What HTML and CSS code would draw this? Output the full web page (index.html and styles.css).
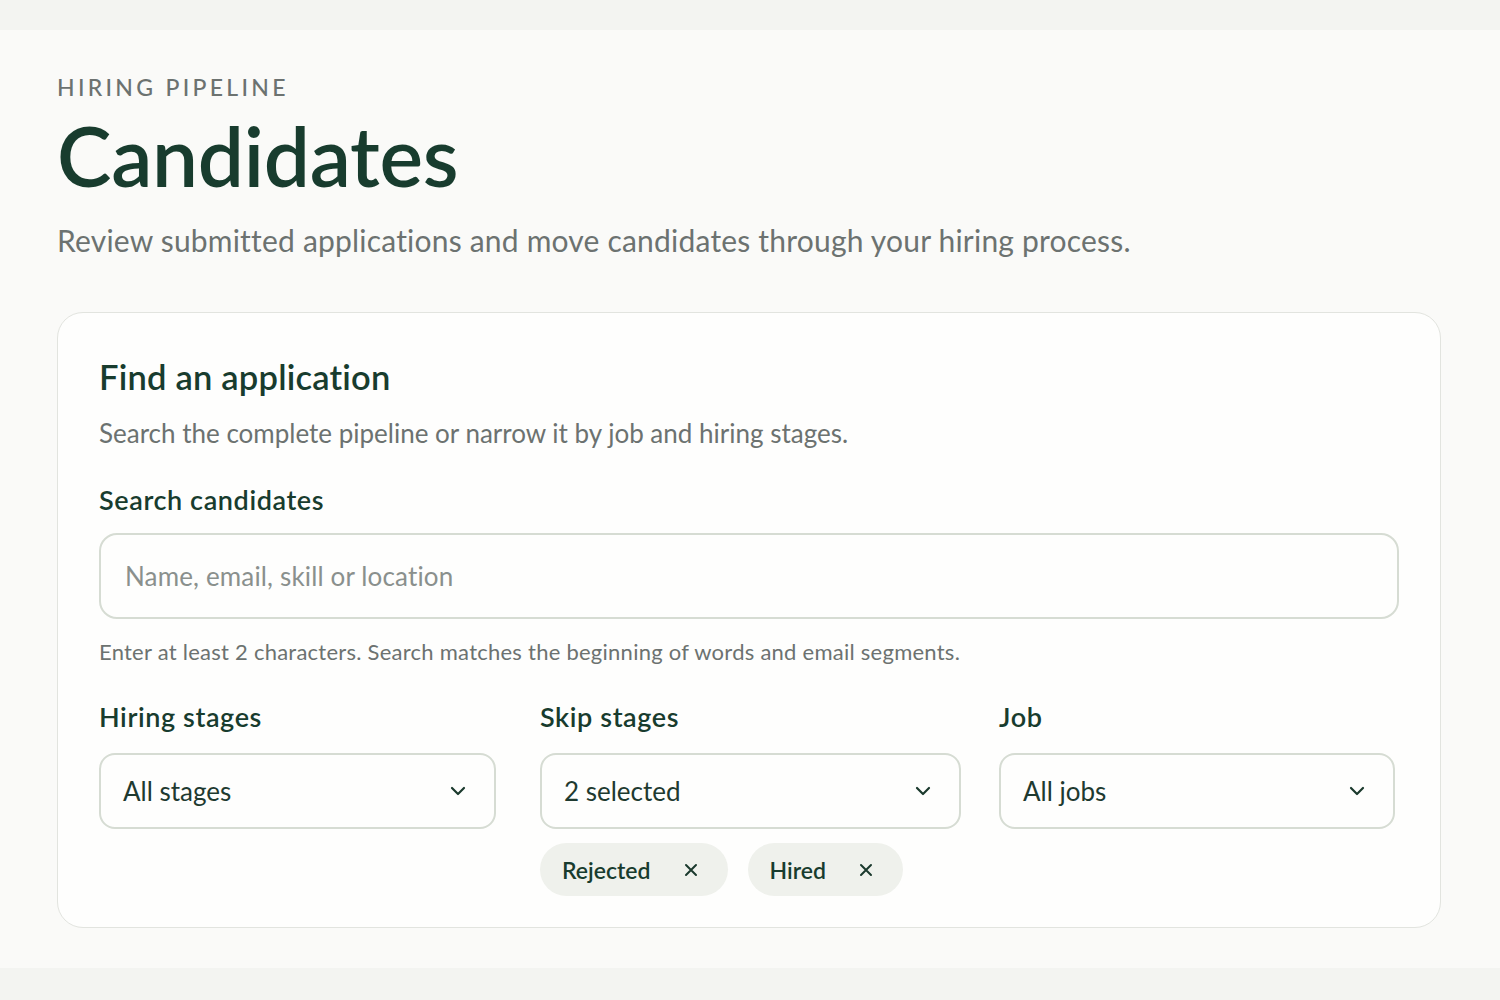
FILE: index.html
```html
<!DOCTYPE html>
<html lang="en">
<head>
<meta charset="utf-8">
<title>Candidates</title>
<link rel="stylesheet" href="styles.css">
</head>
<body>
<main class="page">
  <p class="eyebrow">HIRING PIPELINE</p>
  <h1 class="title">Candidates</h1>
  <p class="subtitle">Review submitted applications and move candidates through your hiring process.</p>

  <section class="card">
    <h2 class="card-title">Find an application</h2>
    <p class="card-desc">Search the complete pipeline or narrow it by job and hiring stages.</p>

    <label class="label label-search" for="search">Search candidates</label>
    <div class="input">
      <span class="placeholder">Name, email, skill or location</span>
    </div>
    <p class="help">Enter at least 2 characters. Search matches the beginning of words and email segments.</p>

    <div class="filters">
      <div class="field field-a">
        <div class="label">Hiring stages</div>
        <div class="select">
          <span>All stages</span>
          <svg class="chev" width="16" height="10" viewBox="0 0 16 10"><path d="M2 2l6 6 6-6" fill="none" stroke="#1b3a2d" stroke-width="2.2" stroke-linecap="round" stroke-linejoin="round"/></svg>
        </div>
      </div>
      <div class="field field-b">
        <div class="label">Skip stages</div>
        <div class="select">
          <span>2 selected</span>
          <svg class="chev" width="16" height="10" viewBox="0 0 16 10"><path d="M2 2l6 6 6-6" fill="none" stroke="#1b3a2d" stroke-width="2.2" stroke-linecap="round" stroke-linejoin="round"/></svg>
        </div>
        <div class="chips">
          <span class="chip">Rejected<svg class="x" width="14" height="14" viewBox="0 0 14 14"><path d="M2 2l10 10M12 2L2 12" stroke="#1b3a2d" stroke-width="2" stroke-linecap="round"/></svg></span>
          <span class="chip">Hired<svg class="x" width="14" height="14" viewBox="0 0 14 14"><path d="M2 2l10 10M12 2L2 12" stroke="#1b3a2d" stroke-width="2" stroke-linecap="round"/></svg></span>
        </div>
      </div>
      <div class="field field-c">
        <div class="label">Job</div>
        <div class="select">
          <span>All jobs</span>
          <svg class="chev" width="16" height="10" viewBox="0 0 16 10"><path d="M2 2l6 6 6-6" fill="none" stroke="#1b3a2d" stroke-width="2.2" stroke-linecap="round" stroke-linejoin="round"/></svg>
        </div>
      </div>
    </div>
  </section>
</main>
</body>
</html>
```

FILE: styles.css
```css
* { box-sizing: border-box; }
html, body { margin: 0; padding: 0; }
body {
  background: #f3f4f1;
  font-family: "Lato", "Noto Sans", sans-serif;
  color: #1b3a2d;
  min-height: 1000px;
}
.page {
  margin-top: 30px;
  background: #fafaf8;
  padding: 42px 59px 40px 57px;
}
.eyebrow {
  margin: 0;
  font-size: 23px;
  line-height: 30px;
  letter-spacing: 3.3px;
  color: #6c7270;
  font-weight: 500;
}
.title {
  margin: 3px 0 0;
  font-size: 82px;
  line-height: 100px;
  letter-spacing: -0.3px;
  font-weight: 600;
  color: #183c2e;
}
.subtitle {
  margin: 15px 0 0;
  font-size: 30px;
  line-height: 40px;
  letter-spacing: 0.2px;
  color: #6c7270;
}
.card {
  margin-top: 52px;
  background: #fefefd;
  border: 1px solid #e2e4df;
  border-radius: 26px;
  padding: 41px 41px 31px;
}
.card-title {
  margin: 0;
  font-size: 34.5px;
  line-height: 46px;
  letter-spacing: 0.2px;
  font-weight: 600;
  color: #183c2e;
}
.card-desc {
  margin: 15px 0 0;
  font-size: 26px;
  line-height: 36px;
  color: #6c7270;
}
.label {
  display: block;
  font-size: 27px;
  line-height: 36px;
  letter-spacing: 0.6px;
  font-weight: 600;
  color: #183c2e;
}
.label-search { margin-top: 31px; }
.input {
  margin-top: 15px;
  height: 86px;
  border: 2px solid #d6dcd3;
  border-radius: 18px;
  display: flex;
  align-items: center;
  padding: 0 24px;
}
.placeholder {
  font-size: 26px;
  letter-spacing: 0.15px;
  color: #8a908d;
}
.help {
  margin: 18px 0 0;
  font-size: 22px;
  line-height: 30px;
  letter-spacing: 0.25px;
  color: #6c7270;
}
.filters {
  margin-top: 32px;
  display: grid;
  grid-template-columns: 441px 459px 1fr;
}
.field-a .select { width: 397px; }
.field-b .select { width: 421px; }
.field-c .select { width: 396px; }
.select {
  margin-top: 18px;
  height: 76px;
  border: 2px solid #d6dcd3;
  border-radius: 16px;
  display: flex;
  align-items: center;
  justify-content: space-between;
  padding: 0 28px 0 22px;
  font-size: 26px;
  color: #1e3a30;
}
.chev { display: block; }
.chips {
  margin-top: 14px;
  display: flex;
  gap: 20px;
}
.chip {
  height: 53px;
  border-radius: 27px;
  background: #eff1ec;
  display: inline-flex;
  align-items: center;
  padding: 0 30px 0 22px;
  gap: 33px;
  font-size: 23px;
  letter-spacing: 0;
  font-weight: 600;
  color: #183c2e;
}
.x { display: block; }
```
